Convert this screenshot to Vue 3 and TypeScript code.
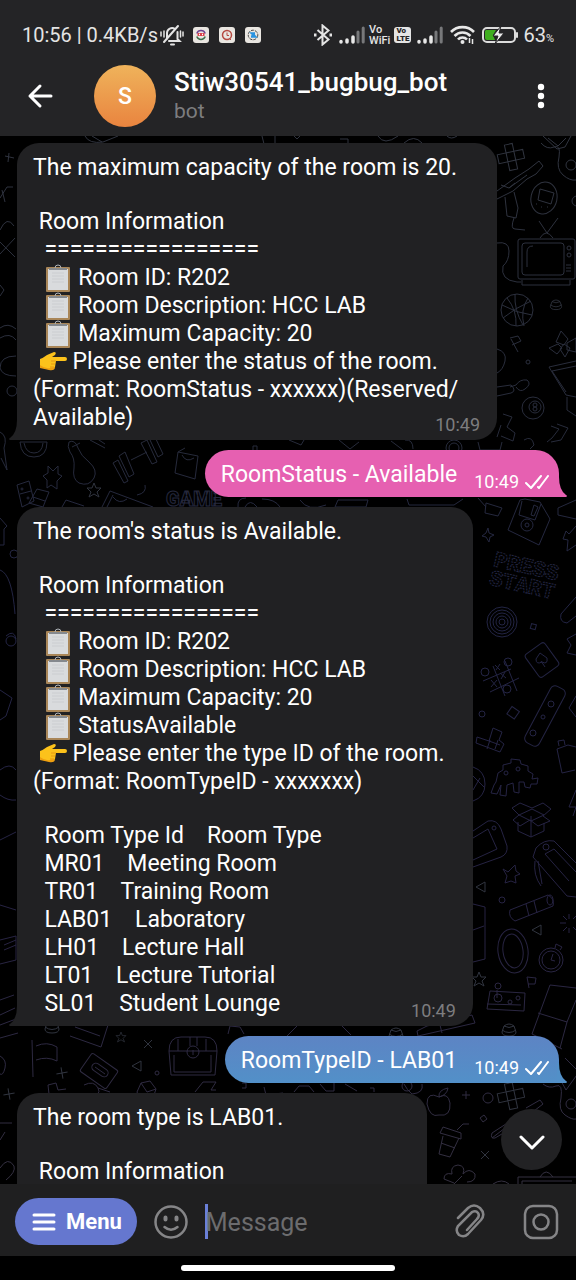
<script setup lang="ts">
import { ref } from 'vue'

type Icon = 'clipboard' | 'point'
interface Line {
  lead: string
  icon?: Icon
  text: string
}
interface Message {
  id: number
  kind: 'in' | 'pink' | 'blue'
  time: string
  blocks: Line[][]
  wide?: boolean
}

const line = (lead: string, text: string, icon?: Icon): Line => ({ lead, text, icon })
const rule = '================='

const messages: Message[] = [
  {
    id: 1,
    kind: 'in',
    time: '10:49',
    blocks: [
      [line('', 'The maximum capacity of the room is 20.')],
      [
        line(' ', 'Room Information'),
        line('  ', rule),
        line('  ', ' Room ID: R202', 'clipboard'),
        line('  ', ' Room Description: HCC LAB', 'clipboard'),
        line('  ', ' Maximum Capacity: 20', 'clipboard'),
        line(' ', ' Please enter the status of the room.', 'point'),
        line('', '(Format: RoomStatus - xxxxxx)(Reserved/\u200bAvailable)'),
      ],
    ],
  },
  { id: 2, kind: 'pink', time: '10:49', blocks: [[line('', 'RoomStatus - Available')]] },
  {
    id: 3,
    kind: 'in',
    time: '10:49',
    blocks: [
      [line('', "The room's status is Available.")],
      [
        line(' ', 'Room Information'),
        line('  ', rule),
        line('  ', ' Room ID: R202', 'clipboard'),
        line('  ', ' Room Description: HCC LAB', 'clipboard'),
        line('  ', ' Maximum Capacity: 20', 'clipboard'),
        line('  ', ' StatusAvailable', 'clipboard'),
        line(' ', ' Please enter the type ID of the room.  ', 'point'),
        line('', '(Format: RoomTypeID - xxxxxxx)'),
      ],
      [
        line('  ', 'Room Type Id    Room Type'),
        line('  ', 'MR01    Meeting Room'),
        line('  ', 'TR01    Training Room'),
        line('  ', 'LAB01    Laboratory'),
        line('  ', 'LH01    Lecture Hall'),
        line('  ', 'LT01    Lecture Tutorial'),
        line('  ', 'SL01    Student Lounge'),
      ],
    ],
  },
  { id: 4, kind: 'blue', time: '10:49', blocks: [[line('', 'RoomTypeID - LAB01')]] },
  {
    id: 5,
    kind: 'in',
    time: '',
    wide: true,
    blocks: [[line('', 'The room type is LAB01.')], [line(' ', 'Room Information')]],
  },
]

const draft = ref('')
</script>

<template>
  <div class="screen">
    <header class="top">
      <div class="status">
        <span class="clock">10:56 | 0.4KB/s</span>
        <svg class="bell" width="24" height="22" viewBox="0 0 24 22" fill="none" stroke="#e4e4e4" stroke-width="2" stroke-linecap="round">
          <path d="M7 15V9a5 5 0 0 1 8-4M17.500 8v7l2 2H9M4 18 18 2M11 20.500h3" />
          <path d="M1 8v4M4 7v6M20.500 7v6M23 8v4" stroke-width="1.500" />
        </svg>
        <div class="apps">
          <svg width="16" height="16" viewBox="0 0 16 16"><rect width="16" height="16" rx="3" fill="#e9e6e1" /><g fill="none" stroke-width="1.500"><path d="M3.800 6.500a4.500 4.500 0 0 1 8.400 0" stroke="#6b3f8e" /><path d="M12.200 9.500a4.500 4.500 0 0 1-8.400 0" stroke="#3c6d4c" /><path d="M4.500 7.500h7" stroke="#d9434c" stroke-width="3" /><path d="M6 7.500h1M9 7.500h1" stroke="#ffffff" /></g></svg>
          <svg width="16" height="16" viewBox="0 0 16 16"><rect width="16" height="16" rx="3" fill="#e9e6e1" /><circle cx="8" cy="8" r="4.500" fill="none" stroke="#b54a42" stroke-width="1.500" /><path d="M8 5.500v3h2M11 12l1 1" fill="none" stroke="#b54a42" /></svg>
          <svg width="16" height="16" viewBox="0 0 16 16"><rect width="16" height="16" rx="3" fill="#e9e6e1" /><circle cx="8" cy="8" r="4.800" fill="none" stroke="#4a4a4a" stroke-dasharray="3 1" /><path d="M10 6.500H7l3 3H6" fill="none" stroke="#2a93e0" stroke-width="2.400" /></svg>
        </div>
        <div class="radios">
          <svg width="20" height="22" viewBox="0 0 20 22" fill="none" stroke="#e4e4e4" stroke-width="2"><path d="m4.500 6 11 9.500-6 5V1.500l6 5-11 9.500" /><path d="M1 11h2.500M16.500 11H19" stroke-width="3" /></svg>
          <svg class="bars" width="26" height="18" viewBox="0 0 26 18" stroke-width="3.500" stroke-linecap="round"><path d="M2 16v-.5M8 16v-2M14 16v-5" stroke="#e8e8e8" /><path d="M19 16V6M24.200 16V2" stroke="#77787a" stroke-width="3" /></svg>
          <span class="vowifi">Vo<br />WiFi</span>
          <span class="volte">Vo<br />LTE</span>
          <svg class="bars" width="26" height="18" viewBox="0 0 26 18" stroke-width="3.500" stroke-linecap="round"><path d="M2 16v-.5M8 16v-2M14 16v-5" stroke="#e8e8e8" /><path d="M19 16V6M24.200 16V2" stroke="#77787a" stroke-width="3" /></svg>
          <svg class="wifi" width="25" height="20" viewBox="0 0 25 20" fill="none" stroke="#e8e8e8" stroke-width="2.600"><path d="M1 7a16 16 0 0 1 23 0M4.500 11a11 11 0 0 1 16 0M8 14.500a6 6 0 0 1 9 0" /><circle cx="12.500" cy="17" r="2" fill="#e8e8e8" stroke="none" /><path d="M19.500 13v5M22.500 14v5" stroke-width="1.500" /></svg>
          <svg class="battery" width="37" height="18" viewBox="0 0 37 18"><rect x="1" y="2" width="32" height="14" rx="4" fill="none" stroke="#dcdcdc" stroke-width="2" /><path d="M35 7v4" stroke="#dcdcdc" stroke-width="2" stroke-linecap="round" /><path d="M4 4h10l-3 5 2 5H5a2 2 0 0 1-2-2V5z" fill="#3fae1f" /><path d="m19 0-8 10h5l-3 8 9-11h-5z" fill="#eeeeee" stroke="#252527" /></svg>
          <span class="percent">63<small>%</small></span>
        </div>
      </div>
      <div class="bar">
        <button class="icon back" aria-label="Back">
          <svg width="26" height="26" viewBox="0 0 26 26" fill="none" stroke="#ffffff" stroke-width="3" stroke-linecap="round" stroke-linejoin="round"><path d="M24 13H3M13 3 3 13l10 10" /></svg>
        </button>
        <div class="avatar">S</div>
        <div class="who">
          <h1>Stiw30541_bugbug_bot</h1>
          <p>bot</p>
        </div>
        <button class="icon more" aria-label="More options">
          <svg width="8" height="26" viewBox="0 0 8 26" fill="#ffffff"><circle cx="4" cy="4" r="3.200" /><circle cx="4" cy="13" r="3.200" /><circle cx="4" cy="22" r="3.200" /></svg>
        </button>
      </div>
    </header>

    <main class="chat">
      <svg class="wallpaper" viewBox="0 136 576 1048" preserveAspectRatio="xMidYMin slice" fill="none" stroke="url(#ink)" stroke-width="1" aria-hidden="true">
        <defs>
          <linearGradient id="ink" gradientUnits="userSpaceOnUse" x1="0" y1="136" x2="0" y2="1184">
            <stop offset="0" stop-color="#30343f" />
            <stop offset="0.300" stop-color="#262a3a" />
            <stop offset="0.450" stop-color="#222444" />
            <stop offset="0.750" stop-color="#262242" />
            <stop offset="1" stop-color="#343040" />
          </linearGradient>
          <g id="tetris"><path d="M-4-13h8v8h9v9h-9v9h-8v-9h-9v-9h9zM-4-5h8v9h-8z" /></g>
          <path id="star" d="m0-7 2 5 5 0-4 4 2 5-5-3-5 3 2-5-4-4h5z" />
          <path id="cross" d="m-4-4 8 8M4-4l-8 8" />
          <path id="tri" d="m-5 0 9-5v10z" />
          <path id="hat" d="M-7 3q0 4 7 4t7-4l-2-6q-5-4-10 0zM-7 1q7 5 14 0M-5-3q5 3 10 0" />
        </defs>
        <!-- top edge -->
        <path d="M85 136q4 8 18 6l15-6M92 136l10 6M294 136l3 3 3-3M340 139l8 0 0 4M378 136q6 10 20 0M404 143q10-9 18 0M447 136q4 4 10 0M262 136l2 8M275 136v7" />
        <!-- right column, upper -->
        <use href="#tetris" transform="translate(511 157) rotate(-12)" />
        <path d="m497 191 18-13 14-9 10-8 4 5-7 8-9 5-14 12-16 8M505 197l2 19 9 2 2-10-4-16M514 218q-4 11 1 11l10 1M501 185l8 3 18-13M509 188l6-5" />
        <ellipse cx="544" cy="198" rx="13" ry="16" transform="rotate(12 544 198)" />
        <path d="m540 189 14 4-3 11-13-4zM536 204h1M541 207h1M547 207h1" />
        <path d="M543 136l14 13 8-2 6-11M541 143q6 7 13 4t5 10q-3 12 4 18t13 5M548 138l10 8 8-8" />
        <circle cx="571" cy="165" r="5" />
        <circle cx="577" cy="201" r="5" />
        <path d="M539 221l8 12 11-15M540 238q6-10 13 0M497 243q12-2 12 8t-6 15q-3 14 14 16h4" />
        <rect x="518" y="239" width="57" height="40" rx="2" />
        <rect x="522" y="243" width="42" height="32" rx="3" />
        <path d="M527 267v-15q0-6 6-6" />
        <path d="M522 280v5h48v-5M566 265h5M566 268h5M566 271h5" />
        <circle cx="569" cy="248" r="2" /><circle cx="569" cy="255" r="2" />
        <circle cx="517" cy="310" r="16" />
        <path d="M502 305q14 8 30 10M515 294q-1 16 8 31M503 318q12-10 28-17M528 298q-8 12-4 28M507 298q10 12 9 28" />
        <use href="#hat" transform="translate(556 304) scale(.8)" />
        <path d="m511 339 7 13M510 338l8-2 3 5-9 4" />
        <path d="m561 331 7 8-4 6-8-3zM549 348l9-4 4 4-5 6zM565 357l-5-8 4-5 6 4zM576 338l-9 5 0 7 9 2z" />
        <path d="M549 367l27-6M549 367l17 28 10 2M552 371l24-5M552 371l14 21M567 397v13l9 6M497 349q10 3 8 12t-8 12" />
        <circle cx="528" cy="362" r="2" />
        <path d="M497 387l14-2q6 6 0 8l-14 3M510 387l6-2q4-6 11-5 5 4-2 9-5 4-9-2" />
        <circle cx="533" cy="408" r="11" /><circle cx="535" cy="407" r="6" /><circle cx="535" cy="405" r="2" /><circle cx="535" cy="409" r="2" />
        <path d="m557 424 11 4-7 12-10 2M547 442l5-4 7-9-8-3M503 414l9 3-5 10 8 6-2 8-12-5M501 425l-4 12" />
        <!-- band below the first message -->
        <path d="M0 432q8 4 4 16l3 22-6-12M20 442q1 15 14 15t13-15zM24 443q2 10 10 10t9-10" />
        <path d="M69 442q6-3 9 6 3 8 11 14 9 8 5 16-5 9-15 5-7-4-5-15 1-10-4-16-3-6-1-10zM72 447l8-4" />
        <path d="M90 440l15 8M96 438l9 6M113 463l5-3 10 21-4 2zM119 456l6-4 9 22-5 3zM131 460l16-8M141 443l6-3 10 22-5 2zM150 440l5-3 8 17-5 3z" />
        <path d="m178 452 20 4-3 23-20-6zM178 452l7-4M182 455q4 8 12 3" />
        <path d="m48 466 5 5 5-5 0 8 4 2-5 5 0 8-6-4-4 3 0-8-4-4 5-3z" />
        <path d="m17 485 12-4 5 20-12 6zM20 494l11-3M37 489l12 3-6 15-14-4zM33 497l12 4" />
        <circle cx="22" cy="489" r="1" /><circle cx="28" cy="498" r="1" />
        <use href="#star" x="94" y="490" />
        <path d="m102 507 8-16 43 16M107 507l6-12M113 497q6 8 14 2M62 507l4-7 18 6M137 495q10-2 8-10" />
        <text x="166" y="506" font-family="Roboto, sans-serif" font-weight="900" font-size="20">GAME</text>
        <path d="M238 507q-1-9 8-9M245 507q5-9 12 0M262 499q13 0 18 8M253 450v-4h4v4M289 440l12 5 3-5M339 440l11 9 9-7M391 441l12 9M405 440q8-1 8 9" />
        <circle cx="454" cy="448" r="8" /><circle cx="454" cy="448" r="5" />
        <path d="M478 442l2 8h20l2-8M524 440q8-5 10 5l-4 4M300 500q8 12 26 5M335 507l3-7h30l-2 7zM407 499l2 6h45l9-6" />
        <!-- right column, middle -->
        <path d="m478 498 8 9M486 503l16 5-4 8-13-3zM525 499l15 3 10 17-11 26-31-15 12-30zM522 501l-3 14 16 5 6-16M534 505l4 2-4 9-3-1z" />
        <circle cx="527" cy="525" r="6" /><circle cx="527" cy="525" r="2" />
        <path d="m488 528 1 5 5 2-4 2-1 5-3-5-4-1 4-3zM576 500l-18 8v7l18 4M576 526l-7 8-3-3-3 8 5 1-1 11 9-6" />
        <g transform="rotate(13 524 577)" font-family="'Liberation Mono', monospace" font-weight="700" font-size="22" stroke-dasharray="2 1">
          <text x="491" y="573">PRESS</text>
          <text x="491" y="592">START</text>
        </g>
        <circle cx="502" cy="622" r="15" /><circle cx="502" cy="622" r="12" /><circle cx="502" cy="622" r="9" /><circle cx="502" cy="622" r="6" /><circle cx="502" cy="622" r="3" />
        <rect x="531" y="624" width="5" height="5" transform="rotate(15 533 626)" />
        <path d="m576 597-15 17q-2 8 6 9l9-7M576 634l-9 5 4 6-4 8 9 2" />
        <rect x="530" y="646" width="24" height="28" rx="3" transform="rotate(-36 542 660)" />
        <path d="m540 653 7 5q1 7-5 4-6 3-6-3zM541 661l4 6" />
        <path d="m483 681 28-12M490 692l29-14M493 666l12 30M505 661l12 30M491 680l6 7M497 680l-6 7M495 665l5 5M500 664l-4 6M500 673l6 5M505 672l-4 7" />
        <circle cx="485" cy="672" r="4" /><circle cx="507" cy="689" r="4" /><circle cx="508" cy="662" r="4" />
        <rect x="537" y="684" width="16" height="64" rx="5" transform="rotate(28 545 716)" />
        <circle cx="551" cy="704" r="3" /><circle cx="533" cy="733" r="3" /><circle cx="543" cy="717" r="2" />
        <circle cx="482" cy="714" r="3" /><rect x="509" y="708" width="9" height="9" transform="rotate(35 513 712)" />
        <path d="m576 696-7 12 7 9" />
        <path d="m477 737 12 4 4-13 9 4-3 8 5 4-4 8-24-9zM489 741l11 4M490 740l-3 9M498 740l-3 9" />
        <path d="m557 749 11-4 8 2M557 749l5 24 13-3M559 746l-1-5 6-1 1 5" />
        <path d="m496 782 2-9 5-3 0-5 8-2 0-4 9 1 1 4 7 2 0 5 5 3-1 5 6-1-1 6-6 0-1 4-5-1-1-5-5 0 0 11-5-1-1-9-6 2-1 11-6-1 1-10-4 9-6-1 3-8z" />
        <circle cx="506" cy="773" r="2" /><circle cx="518" cy="769" r="2" />
        <path d="M473 767q12 4 12 17t-12 17M473 776l11 11M473 790l7-12" />
        <path d="m512 808 8-5 12 5 11-5 8 6-8 7 7 5-12 5-8-6-10 6-7-6 6-5zM519 815l13-6 12 6-13 6zM518 822v9l13 6 13-6v-8M531 816v21M576 790l-7 17h7l-3 9" />
        <path d="m473 831 15-10q9-2 13 8l6 17q1 8-6 11l-28 10M473 838l15-9 9 20-24 11" /><circle cx="494" cy="828" r="2" />
        <path d="m533 857 3-9q8-9 18-7l22 22M533 857l34 39 9 1M545 854l9-5 22 23M545 854l24 27M535 861q-2 14 6 25M538 861l4 23" /><circle cx="546" cy="847" r="3" />
        <path d="m503 869 5 3 7-7 1 6 4 3-5 2 1 7-5-2-6 2 2-7z" />
        <use href="#tri" x="481" y="887" /><circle cx="502" cy="900" r="3" />
        <path d="m510 910 38-15q7 4 5 11l-38 15q-7-4-5-11zM526 904l3 12M534 901l3 12" /><ellipse cx="550" cy="900" rx="3" ry="5" />
        <path d="M569 914v5M569 928v5M560 923h6M563 916l4 4M563 931l4-4M576 916l-3 3M576 930l-3-3M473 904l12 3v52l-12 3M473 930l11-4" />
        <ellipse cx="513" cy="951" rx="15" ry="22" transform="rotate(-8 513 951)" /><ellipse cx="513" cy="951" rx="10" ry="17" transform="rotate(-8 513 951)" />
        <use href="#tri" x="537" y="930" />
        <circle cx="551" cy="960" r="12" /><circle cx="551" cy="960" r="9" /><path d="m553 954-2 6 4 1M555 948l1-4 6 3-2 3" />
        <use href="#star" x="479" y="979" /><path d="m529 988-2-11 9 1-1 6-7 0" />
        <path d="m490 991 35 2-1 18-37-2zM487 1004l34 1M497 990v8" /><circle cx="498" cy="986" r="3" /><circle cx="498" cy="998" r="4" /><circle cx="510" cy="1002" r="2" /><circle cx="518" cy="998" r="2" />
        <path d="m550 985 26 3M550 985l-18 49M538 1013l29 9M576 1000l-9 22-7 26M562 1049l-30-15" />
        <!-- left margin -->
        <path d="m5 156 9 2M9 153l-1 9M0 198l7-11h6M2 190l3 12M0 230q7-15 14-4M0 242l15 15M0 254l15-16M0 285l4 5-4 6M0 328q8-6 16 1M0 338q10-6 16 2M16 356q-16 0-16 12 2 8 16 8M0 518l7 8-3 3v16H0M0 570q12 4 15 44M6 636q8-7 10 3M0 690l12 8-6 18-6 4M0 770q10-8 16 0M0 795q8 6 16 5M0 840l16-8M0 905l16 5M0 940l16-4v24l-16 4M4 945l12-5M4 950l12-5M0 1000l14-5M0 1015l15-7M0 1025l16-6M0 1038l18-5" />
        <circle cx="12" cy="391" r="5" /><circle cx="14" cy="554" r="4" /><circle cx="11" cy="641" r="5" />
        <!-- band above the last message -->
        <path d="m32 1040 1 37M36 1046q11-5 21 1v14q-10-5-21-1M70 1036l31 11 7-22M75 1027l25 9" />
        <use href="#hat" x="52" y="1026" /><use href="#star" transform="translate(121 1037) scale(.7)" /><use href="#cross" x="148" y="1044" /><use href="#tri" x="137" y="1066" /><circle cx="157" cy="1073" r="2" /><use href="#cross" transform="translate(62 1073) rotate(35)" /><use href="#cross" transform="translate(9 1094) rotate(35)" />
        <rect x="83" y="1060" width="32" height="22" rx="2" transform="rotate(35 99 1071)" />
        <rect x="91" y="1066" width="18" height="8" rx="4" transform="rotate(35 100 1070)" />
        <path d="M95 1067l10 7M84 1085q10-5 14 3t-8 6M98 1088l12 4M49 1094l-1-9 8-2 2 7 8-1M137 1092l4-9 9-2 6 8-3 9-13 2zM141 1083l6 9 9-3M195 1092l8-10h13l-5 8h5" />
        <path d="M169 1051q0-14 12-14h24q12 0 12 14l-2 24h-44zM169 1051h48M174 1055v17h37v-17M178 1039v12M206 1039v12M190 1037v9M197 1037v9" />
        <circle cx="193" cy="1052" r="6" /><path d="M193 1050v5M0 1056q7 4 5 12t-5 6M228 1034l2-8 10 1 4 7M242 1083h4v5h-4M264 1087l2 8 17-2M287 1036l10-10M341 1025l10 10M417 1031l10-5 45-11 3 8-57 13zM440 1025l2 8" />
        <use href="#hat" x="396" y="1033" /><use href="#hat" x="509" y="1029" />
        <path d="M294 1092l5-6h10l5 6M320 1084l6 7h8v-8M345 1084l12 7M370 1088h4v4M404 1084q3 6 8 10 12-1 10-10" /><circle cx="407" cy="1086" r="5" />
        <path d="M439 1097q-12-6-12 7 3 14 12 11 12 2 11-12-2-11-11-6zM439 1097q-1-7 9-9-1 7-9 9" />
        <path d="m466 1091 0 8M462 1095h8" /><circle cx="488" cy="1098" r="5" />
        <use href="#tetris" transform="translate(511 1096) rotate(-12)" />
        <path d="M543 1084q6 5 13 2t5 12q-3 12 4 17t11 4M565 1058l14 14-13 18-6-11" /><circle cx="571" cy="1104" r="5" />
        <path d="m443 1127 18 6 0 6-21-6zM443 1136l-4 18 11 3 9-19M457 1130l6-6h6M441 1143l14 5M492 1138l13-10M480 1118l4-3 3 4-4 3zM526 1108l14-8 3 4-13 10M509 1122l-17 11q-2 6 3 5l12-7" />
        <use href="#cross" x="485" y="1155" />
        <path d="M444 1179q0-7 8-5-2-8 6-9 8 1 5 9 6-7 12 0 1 8-8 8M444 1179l10 4M462 1176l-8 8M493 1184q9-6 16 0M518 1184v-7h58M522 1184v-3h50M540 1177q6-10 13 0M0 1123h12M0 1140l5-8M0 1168q8-12 14-2 2 6-8 14" />
      </svg>

      <article v-for="m in messages" :key="m.id" :class="['bubble', m.kind, { wide: m.wide }]">
        <div class="body">
          <p v-for="(block, b) in m.blocks" :key="b">
            <span v-for="(l, i) in block" :key="i" class="line">{{ l.lead }}<svg v-if="l.icon === 'clipboard'" class="emoji" width="28" height="28" viewBox="0 0 28 28" role="img" aria-label="Clipboard"><rect x="2" y="3" width="24" height="25" rx="1" fill="#a98658" /><rect x="4" y="5" width="20" height="21" fill="#d9dbdd" /><path d="M8 9h12M8 12h12M8 15h12M8 18h12" stroke="#cbcdd0" stroke-width="1" /><path d="M5 4h18v2H5z" fill="#85898e" /><path d="M11 4q0-3 3-3t3 3" fill="none" stroke="#aeb3b8" stroke-width="1" /></svg><svg v-else-if="l.icon === 'point'" class="emoji" width="28" height="28" viewBox="0 0 28 28" role="img" aria-label="Pointing right"><path d="M1 11Q4 10 8 7l7-3q3 0 1 3l-3 2h13q2 0 2 2t-2 2h-9l-1 6q-2 3-8 2l-7-2z" fill="#fcc21b" /><path d="M1 17q5 4 10 3l5-1q0 4-6 3l-9-2zM17 13h9" fill="#ee9f10" /><path d="M12 13h5M12 16h4M11 19h4" stroke="#e89a12" stroke-width="1" /></svg>{{ l.text }}</span>
          </p>
        </div>
        <div v-if="m.time" class="meta">
          <time>{{ m.time }}</time>
          <svg v-if="m.kind !== 'in'" width="24" height="14" viewBox="0 0 24 14" fill="none" stroke="#ffffff" stroke-width="2" stroke-linecap="round" stroke-linejoin="round" role="img" aria-label="Read"><path d="m1 8 5 5L16 1M13 12l1 1L23 1" /></svg>
        </div>
        <svg class="tail" width="11" height="20" viewBox="0 0 11 20" aria-hidden="true"><path d="M11 0v20H2q-2-1 0-2 7-5 7-18z" /></svg>
      </article>

      <button class="down" aria-label="Scroll to latest">
        <svg width="28" height="20" viewBox="0 0 28 20" fill="none" stroke="#ffffff" stroke-width="3" stroke-linecap="round" stroke-linejoin="round"><path d="m3 7 11 11L25 7" /></svg>
      </button>
    </main>

    <footer class="composer">
      <button class="menu">
        <svg width="24" height="20" viewBox="0 0 24 20" stroke="#ffffff" stroke-width="3" stroke-linecap="round"><path d="M2 3h20M2 10h20M2 17h20" /></svg>
        Menu
      </button>
      <button class="icon smile" aria-label="Emoji">
        <svg width="36" height="36" viewBox="0 0 36 36" fill="none" stroke="#858587" stroke-width="2.500" stroke-linecap="round"><circle cx="18" cy="18" r="15.500" /><path d="M11.500 23q6.500 5.500 13 0" /><path d="M12.500 13.500v2M23.500 13.500v2" stroke-width="4" /></svg>
      </button>
      <label class="field">
        <span class="caret" aria-hidden="true"></span>
        <input v-model="draft" type="text" placeholder="Message" aria-label="Message" />
      </label>
      <button class="icon clip" aria-label="Attach">
        <svg width="30" height="36" viewBox="0 0 30 36" fill="none" stroke="#858587" stroke-width="2.500" stroke-linecap="round"><path d="M3 15 13 5q6-5 12 0 6 6 1 12L13 31q-4 4-9 1-4-4-1-9l14-14q4-2 6 1 2 3-1 6L12 27" transform="translate(0 -1)" /></svg>
      </button>
      <button class="icon camera" aria-label="Record video">
        <svg width="36" height="36" viewBox="0 0 36 36" fill="none" stroke="#858587" stroke-width="2.500"><rect x="2" y="2" width="32" height="32" rx="8" /><circle cx="18" cy="18" r="7.500" /></svg>
      </button>
    </footer>
    <div class="home"><span></span></div>
  </div>
</template>

<style>
body {
  margin: 0;
  background: #000000;
}
</style>

<style scoped>
.screen {
  display: flex;
  flex-direction: column;
  height: 100vh;
  overflow: hidden;
  color: #ffffff;
  font-family: Roboto, "Noto Sans", sans-serif;
}
button {
  border: 0;
  padding: 0;
  background: none;
  color: inherit;
  font: inherit;
}
svg {
  display: block;
  flex: none;
}
.icon {
  display: grid;
  place-items: center;
}
.top {
  flex: none;
  background: #242426;
}
.status {
  display: flex;
  align-items: center;
  height: 44px;
  padding: 14px 22px 0;
  box-sizing: border-box;
  height: 56px;
  color: #e4e4e4;
  font-size: 20px;
}
.clock {
  white-space: nowrap;
}
.bell {
  margin-left: 2px;
}
.apps {
  display: flex;
  gap: 10px;
  margin-left: 9px;
}
.radios {
  display: flex;
  align-items: center;
  gap: 4px;
  margin-left: auto;
}
.bars {
  margin-left: 2px;
}
.wifi {
  margin-left: 3px;
}
.battery {
  margin-left: 3px;
}
.vowifi {
  font-size: 11px;
  line-height: 11px;
  font-weight: 500;
}
.volte {
  padding: 0 2px;
  border-radius: 3px;
  background: #e4e4e4;
  color: #242426;
  font-size: 8px;
  line-height: 8px;
  font-weight: 900;
}
.percent small {
  font-size: 11px;
}
.bar {
  display: flex;
  align-items: center;
  height: 80px;
  padding: 0 31px 0 27px;
}
.avatar {
  display: grid;
  place-items: center;
  width: 62px;
  height: 62px;
  margin-left: 41px;
  border-radius: 50%;
  background: linear-gradient(#efb35b, #e9843f);
  font-size: 23px;
  font-weight: 500;
}
.who {
  flex: 1;
  min-width: 0;
  margin-left: 18px;
}
.who h1 {
  margin: 0;
  font-size: 26px;
  line-height: 30px;
  font-weight: 500;
}
.who p {
  margin: 0;
  color: #7d7d7f;
  font-size: 21px;
  line-height: 28px;
}
.chat {
  position: relative;
  display: flex;
  flex: 1;
  flex-direction: column;
  align-items: flex-start;
  gap: 10px;
  min-height: 0;
  padding: 7px 17px 0;
  overflow: hidden;
  background: #000000;
}
.wallpaper {
  position: absolute;
  inset: 0;
  width: 100%;
  height: 100%;
}
.bubble {
  position: relative;
  display: flex;
  flex: none;
  flex-direction: column;
  box-sizing: border-box;
  max-width: calc(100% - 62px);
  padding: 11px 17px 8px 16px;
  border-radius: 22px 22px 22px 0;
  background: #212123;
  font-size: 23px;
  line-height: 28px;
}
.wide {
  min-width: 410px;
  min-height: 120px;
}
.body {
  display: flex;
  flex-direction: column;
  gap: 26px;
}
.body p {
  margin: 0;
}
.line {
  display: block;
  white-space: pre-wrap;
}
.emoji {
  display: inline-block;
  vertical-align: bottom;
}
.meta {
  display: flex;
  align-items: center;
  align-self: flex-end;
  gap: 6px;
  height: 20px;
  margin-top: -17px;
  margin-bottom: -3px;
  color: #7d7d7f;
  font-size: 18px;
  line-height: 20px;
}
.tail {
  position: absolute;
  bottom: 0;
  left: -9px;
  fill: #212123;
}
.pink,
.blue {
  flex-direction: row;
  align-self: flex-end;
  gap: 17px;
  padding-right: 10px;
  border-radius: 24px 24px 0 24px;
}
.pink {
  background: #e660b1;
}
.blue {
  background: linear-gradient(#5d84c4, #5290c8);
}
.pink .meta,
.blue .meta {
  margin: 0 0 -3px;
  color: #ffffff;
}
.pink .tail,
.blue .tail {
  right: -9px;
  left: auto;
  transform: scaleX(-1);
}
.pink .tail {
  fill: #e660b1;
}
.blue .tail {
  fill: #5290c8;
}
.down {
  position: absolute;
  right: 14px;
  bottom: 14px;
  display: grid;
  place-items: center;
  width: 61px;
  height: 61px;
  border-radius: 50%;
  background: #222224;
}
.composer {
  display: flex;
  flex: none;
  align-items: center;
  box-sizing: border-box;
  height: 72px;
  padding: 3px 17px 0 15px;
  background: #1f1f20;
}
.menu {
  display: flex;
  align-items: center;
  gap: 10px;
  height: 47px;
  padding: 0 15px 0 17px;
  border-radius: 24px;
  background: #6577cf;
  font-size: 22px;
  font-weight: 700;
}
.smile {
  margin-left: 16px;
}
.field {
  display: flex;
  flex: 1;
  align-items: center;
  min-width: 0;
  margin-left: 16px;
}
.caret {
  flex: none;
  width: 3px;
  height: 35px;
  margin-right: -2px;
  background: #6a80d8;
}
.field input {
  flex: 1;
  min-width: 0;
  padding: 2px 0 0;
  border: 0;
  outline: 0;
  background: none;
  color: #ffffff;
  font: inherit;
  font-size: 25px;
}
.field input::placeholder {
  color: #6c6c6e;
  opacity: 1;
}
.clip {
  margin-right: 38px;
}
.home {
  display: grid;
  flex: none;
  place-items: center;
  height: 24px;
  background: #000000;
}
.home span {
  width: 37%;
  height: 6px;
  border-radius: 3px;
  background: #ffffff;
}
</style>
